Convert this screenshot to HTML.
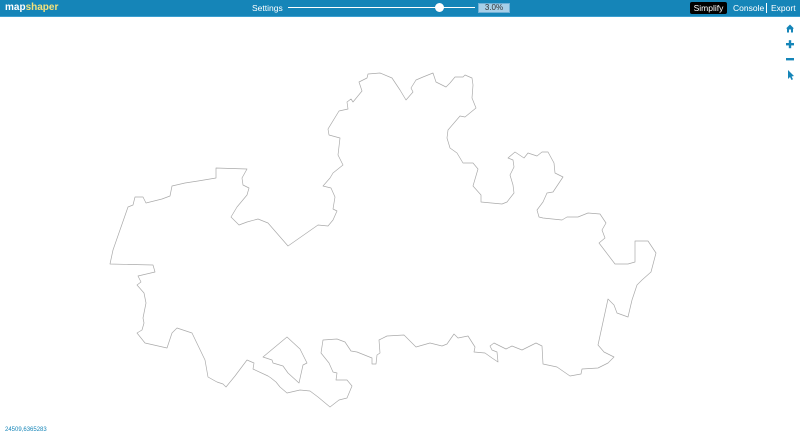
<!DOCTYPE html>
<html><head><meta charset="utf-8"><style>
body{margin:0;width:800px;height:439px;overflow:hidden;background:#fff;font-family:"Liberation Sans",sans-serif;position:relative}
#hdr{position:absolute;left:0;top:0;width:800px;height:16px;background:#1585b8;border-bottom:1px solid #3a9fd0;color:#fff;font-size:8.5px}
.t{position:absolute;top:3px;line-height:10px}
</style></head><body>
<div id="hdr">
<div class="t" style="left:5px;font-weight:bold;font-size:10px;top:3px">map<span style="color:#f4e27a">shaper</span></div>
<div class="t" style="left:252px">Settings</div>
<div style="position:absolute;left:288px;top:7px;width:187px;height:1px;background:#fff"></div>
<div style="position:absolute;left:435px;top:3px;width:9px;height:9px;border-radius:50%;background:#fff"></div>
<div style="position:absolute;left:478px;top:3px;width:32px;height:10px;background:#a7cfe8;border:1px solid #6fb0d6;box-sizing:border-box;color:#333;font-size:8px;text-align:center;line-height:8px">3.0%</div>
<div style="position:absolute;left:690px;top:2px;width:37px;height:12px;background:#000;border-radius:2px;text-align:center;line-height:12px">Simplify</div>
<div class="t" style="left:733px">Console</div>
<div style="position:absolute;left:766px;top:3px;width:1px;height:10px;background:#fff"></div>
<div class="t" style="left:771px">Export</div>
</div>
<svg style="position:absolute;left:0;top:0" width="800" height="439">
<g fill="#1585b8">
<path d="M790 24.5 L786 28.5 L787 28.5 L787 32.5 L789 32.5 L789 29.5 L791 29.5 L791 32.5 L793 32.5 L793 28.5 L794 28.5 Z"/>
<rect x="786" y="43" width="8" height="2.4"/><rect x="788.8" y="40.2" width="2.4" height="8"/>
<rect x="786" y="58" width="8" height="2.4"/>
<path d="M788 70 L788 79 L790 77 L791.5 80 L793 79.3 L791.6 76.5 L794 76 Z"/>
</g>
<g fill="none" stroke="#aaa" stroke-width="0.7" stroke-linejoin="round">
<path d="M110,264 L113,250 L128,207 L133,205 L135,197 L143,197 L146,203 L162,199 L170,196 L172,186 L185,183 L198,181 L216,178 L216,168 L247,169 L242,178 L243,185 L249,188 L247,195 L237,207 L231,217 L239,225 L247,222 L258,219 L268,223 L288,246 L318,225 L328,226 L333,220 L337,211 L333,209 L335,197 L331,188 L323,186 L330,178 L333,173 L343,165 L338,155 L340,138 L329,135 L328,129 L339,111 L348,109 L347,102 L351,99 L353,102 L362,91 L359,82 L367,78 L368,74 L380,73 L392,78 L400,90 L406,100 L413,92 L411,88 L416,80 L423,77 L433,73 L436,82 L446,87 L450,83 L455,77 L463,77 L465,75 L472,78 L473,85 L472,98 L476,108 L465,117 L460,116 L448,130 L447,138 L450,148 L457,153 L463,163 L473,163 L478,169 L473,186 L481,195 L481,202 L502,204 L507,202 L514,193 L513,185 L510,175 L514,167 L513,160 L508,158 L515,152 L524,158 L528,153 L537,156 L542,152 L548,152 L554,163 L555,173 L563,177 L553,192 L547,193 L543,202 L537,210 L539,217 L543,218 L562,220 L567,217 L578,217 L588,213 L600,214 L606,223 L602,230 L605,238 L599,243 L615,264 L628,264 L635,262 L635,241 L648,241 L656,253 L651,272 L642,280 L637,285 L632,300 L628,317 L617,313 L614,305 L608,299 L598,345 L604,352 L614,357 L608,363 L598,368 L582,369 L581,374 L570,376 L557,367 L543,364 L542,346 L536,343 L522,350 L512,346 L506,349 L498,345 L494,343 L490,346 L492,350 L497,352 L498,362 L492,358 L485,353 L474,352 L475,347 L468,336 L458,338 L454,334 L447,344 L442,346 L430,343 L416,347 L404,335 L387,336 L379,340 L380,353 L377,355 L376,364 L372,364 L372,358 L367,356 L357,352 L351,351 L345,342 L337,339 L323,340 L321,353 L329,363 L333,372 L337,373 L336,380 L347,380 L352,386 L347,398 L339,400 L330,407 L318,397 L310,391 L300,390 L287,393 L280,387 L276,382 L271,378 L268,376 L253,369 L254,363 L247,360 L235,376 L226,387 L223,384 L217,382 L208,377 L205,360 L192,333 L177,328 L172,333 L167,348 L145,343 L137,333 L142,330 L144,323 L143,318 L146,303 L144,293 L137,285 L141,282 L138,276 L155,272 L153,265 Z"/>
<path d="M287,337 L263,357 L272,360 L273,363 L283,366 L288,373 L299,383 L303,365 L307,363 L300,349 Z"/>
</g>
</svg>
<div style="position:absolute;left:5px;top:427px;font-size:6px;color:#1585b8">24509,6365283</div>
</body></html>
